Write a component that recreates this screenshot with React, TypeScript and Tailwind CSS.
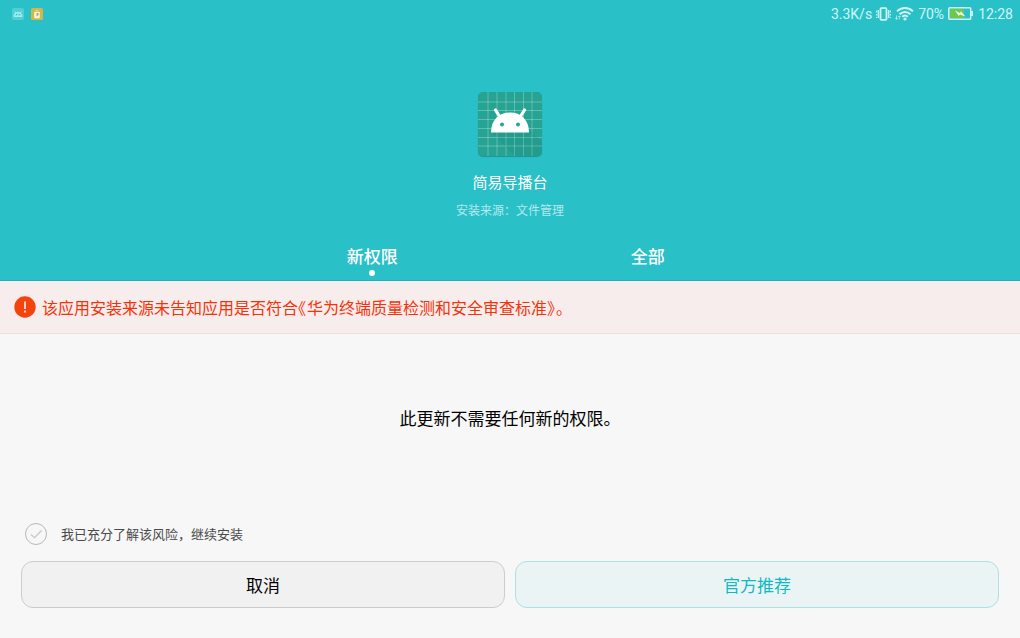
import { useState } from 'react'

const tabs = ['新权限', '全部']

const AndroidHead = ({ className }: { className?: string }) => (
    <svg viewBox="0 0 38 25" className={className} aria-hidden="true">
        <path
            d="M4.500 2 9.500 10M33.500 2 28.500 10"
            stroke="currentColor"
            strokeWidth="3.200"
            strokeLinecap="round"
        />
        <path
            d="M0 24.500C0 12 8 4.500 19 4.500s19 7.500 19 20Z"
            fill="currentColor"
        />
        <circle cx="11" cy="16.500" r="2" fill="#26a69a" />
        <circle cx="27" cy="16.500" r="2" fill="#26a69a" />
    </svg>
)

const StatusBar = () => (
    <div className="flex h-[27px] items-center justify-between pr-[7px] pl-3 text-[#d2f5f7]">
        <div className="flex items-center gap-[7px]">
            <svg width="12" height="12" viewBox="0 0 12 12" aria-hidden="true">
                <rect width="12" height="12" rx="2" fill="#4fcfd5" />
                <path
                    d="M2 8.5C2 5.8 3.4 4.4 6 4.4s4 1.4 4 4.1ZM2.6 3.4l1.2 1.5M9.4 3.4 8.2 4.9"
                    fill="#8be6e6"
                    stroke="#b9f1f1"
                    strokeWidth="0.8"
                />
                <path d="M4 6.6h1M7 6.6h1" stroke="#2bb5bb" />
            </svg>
            <svg width="12" height="12" viewBox="0 0 13 13" aria-hidden="true">
                <rect width="13" height="13" rx="2" fill="#d2b84a" />
                <rect x="3.5" y="4" width="6" height="7" rx="0.8" fill="#fbf6df" />
                <path d="M5 2.5h3" stroke="#ece0a8" />
                <path d="M6.500 9V5.500M6.500 6h1.300v1.500H6.500" fill="none" stroke="#a3a35c" />
            </svg>
        </div>
        <div className="flex items-center gap-1 font-[Roboto,sans-serif] text-sm leading-5">
            <span>3.3K/s</span>
            <svg width="15" height="14" viewBox="0 0 15 14" fill="none" stroke="currentColor" aria-hidden="true">
                <rect x="4.5" y="1.2" width="6" height="11.6" rx="0.8" strokeWidth="1.8" />
                <path d="M2.3 3v8M12.7 3v8" strokeWidth="1.2" />
                <path d="M.7 3.5v2M.7 7v1.500M.7 10v1M14.3 3.5v2M14.3 7v1.500M14.3 10v1" strokeWidth="1.1" />
            </svg>
            <svg width="19" height="15" viewBox="0 0 19 15" fill="none" stroke="currentColor" aria-hidden="true">
                <path d="M2 5.4C6.4 0.9 13.600 0.9 18 5.4M4.6 8.200C7.6 5.200 12.4 5.200 15.4 8.200M7.200 10.8C8.8 9.300 11.2 9.300 12.8 10.8" strokeWidth="2" />
                <circle cx="10" cy="13" r="1.6" fill="currentColor" stroke="none" />
                <path d="M1.500 9.500v4M.2 12 1.500 13.300l1.300-1.300M4.300 13.500v-3.500M3.200 11l1.100-1.200L5.400 11" strokeWidth="0.7" />
            </svg>
            <span>70%</span>
            <svg width="25" height="13" viewBox="0 0 25 13" className="mr-px" aria-hidden="true">
                <rect x="0.8" y="0.8" width="21.900" height="11.400" rx="1" fill="none" stroke="currentColor" strokeWidth="1.500" />
                <rect x="2" y="2" width="14" height="9" fill="#6cc846" />
                <path d="M24 4v5" stroke="currentColor" strokeWidth="1.800" />
                <path d="M7 3.400 12 6 13 4.200 17.300 9.500 11.800 7.400 10.700 9Z" fill="#eefcf5" />
            </svg>
            <span>12:28</span>
        </div>
    </div>
)

const AppIcon = () => (
    <div className="relative flex size-16 items-center justify-center overflow-hidden rounded-[5px] bg-[#26a393] text-white shadow-[0_1px_1px_rgba(0,90,90,0.4)]">
        <svg viewBox="0 0 64 64" className="absolute inset-0" aria-hidden="true">
            <path
                d="M10 0v64M19 0v64M28 0v64M36.500 0v64M45.500 0v64M54 0v64M0 10h64M0 18.500h64M0 27.500h64M0 36.500h64M0 45.500h64M0 54h64"
                stroke="#fff"
                strokeOpacity="0.27"
            />
            <path d="M13 40 37 64H64V50L50 36Z" fill="#00695c" fillOpacity="0.1" />
        </svg>
        <AndroidHead className="relative mb-2 w-[38px]" />
    </div>
)

export default function App() {
    const [tab, setTab] = useState(0)
    const [accepted, setAccepted] = useState(false)

    return (
        <div className="flex min-h-screen flex-col bg-[#f7f7f7] font-['Noto_Sans_CJK_SC',sans-serif] text-black">
            <header className="border-b border-[#1eb0ba] bg-[#2ac0c8] text-white">
                <StatusBar />
                <div className="flex flex-col items-center pt-[65px]">
                    <AppIcon />
                    <h1 className="mt-4 text-[15px] leading-5">简易导播台</h1>
                    <p className="mt-2 text-xs leading-5 text-[#b5e9ec]">
                        安装来源：文件管理
                    </p>
                    <nav className="mt-[22px] grid w-[54%] grid-cols-2">
                        {tabs.map((name, i) => (
                            <button
                                key={name}
                                type="button"
                                onClick={() => setTab(i)}
                                className="flex flex-col items-center pb-1 text-[17px] leading-7 font-medium"
                            >
                                {name}
                                <span
                                    className={
                                        i === tab
                                            ? 'size-[6px] rounded-full bg-white'
                                            : 'size-[6px]'
                                    }
                                />
                            </button>
                        ))}
                    </nav>
                </div>
            </header>

            <div className="flex items-center gap-[6px] border-b border-[#f2dad5] bg-[#f7edec] px-[14px] py-[14px] text-[#f5330a]">
                <svg width="22" height="22" viewBox="0 0 22 22" className="shrink-0" aria-hidden="true">
                    <circle cx="11" cy="11" r="10.7" fill="#f4430f" />
                    <path d="M11 5.500v7.500M11 14.500v2" stroke="#fff" strokeWidth="1.500" />
                </svg>
                <p className="text-base leading-6">
                    该应用安装来源未告知应用是否符合
                    <span className="pr-px [font-feature-settings:'halt']">《</span>
                    华为终端质量检测和安全审查标准
                    <span className="pr-px [font-feature-settings:'halt']">》</span>。
                </p>
            </div>

            <main className="flex flex-1 items-center justify-center text-[17px] leading-6">
                <p>此更新不需要任何新的权限。</p>
            </main>

            <footer className="px-[21px] pt-5 pb-[30px]">
                <label className="flex w-fit items-center gap-[14px] pl-1 text-[13px] leading-6 text-[#4a4a4a]">
                    <span className="relative size-[22px]">
                        <input
                            type="checkbox"
                            checked={accepted}
                            onChange={(e) => setAccepted(e.target.checked)}
                            className="block size-full appearance-none rounded-full border border-[#b8b8b8] checked:border-[#00b4c0] checked:bg-[#c9eef0]"
                        />
                        <svg viewBox="0 0 22 22" className="pointer-events-none absolute inset-0" aria-hidden="true">
                            <path d="M6 11.500 9.500 14.700 16.500 7.500" fill="none" stroke="#c6c6c6" strokeWidth="1.300" />
                        </svg>
                    </span>
                    我已充分了解该风险，继续安装
                </label>
                <div className="mt-[15px] grid grid-cols-2 gap-[10px] text-[17px] leading-6">
                    <button
                        type="button"
                        className="h-[47px] rounded-xl border border-[#cccccc] bg-[#f1f1f1]"
                    >
                        取消
                    </button>
                    <button
                        type="button"
                        className="h-[47px] rounded-xl border border-[#aee0e3] bg-[#ebf4f4] text-[#11b9c4]"
                    >
                        官方推荐
                    </button>
                </div>
            </footer>
        </div>
    )
}
